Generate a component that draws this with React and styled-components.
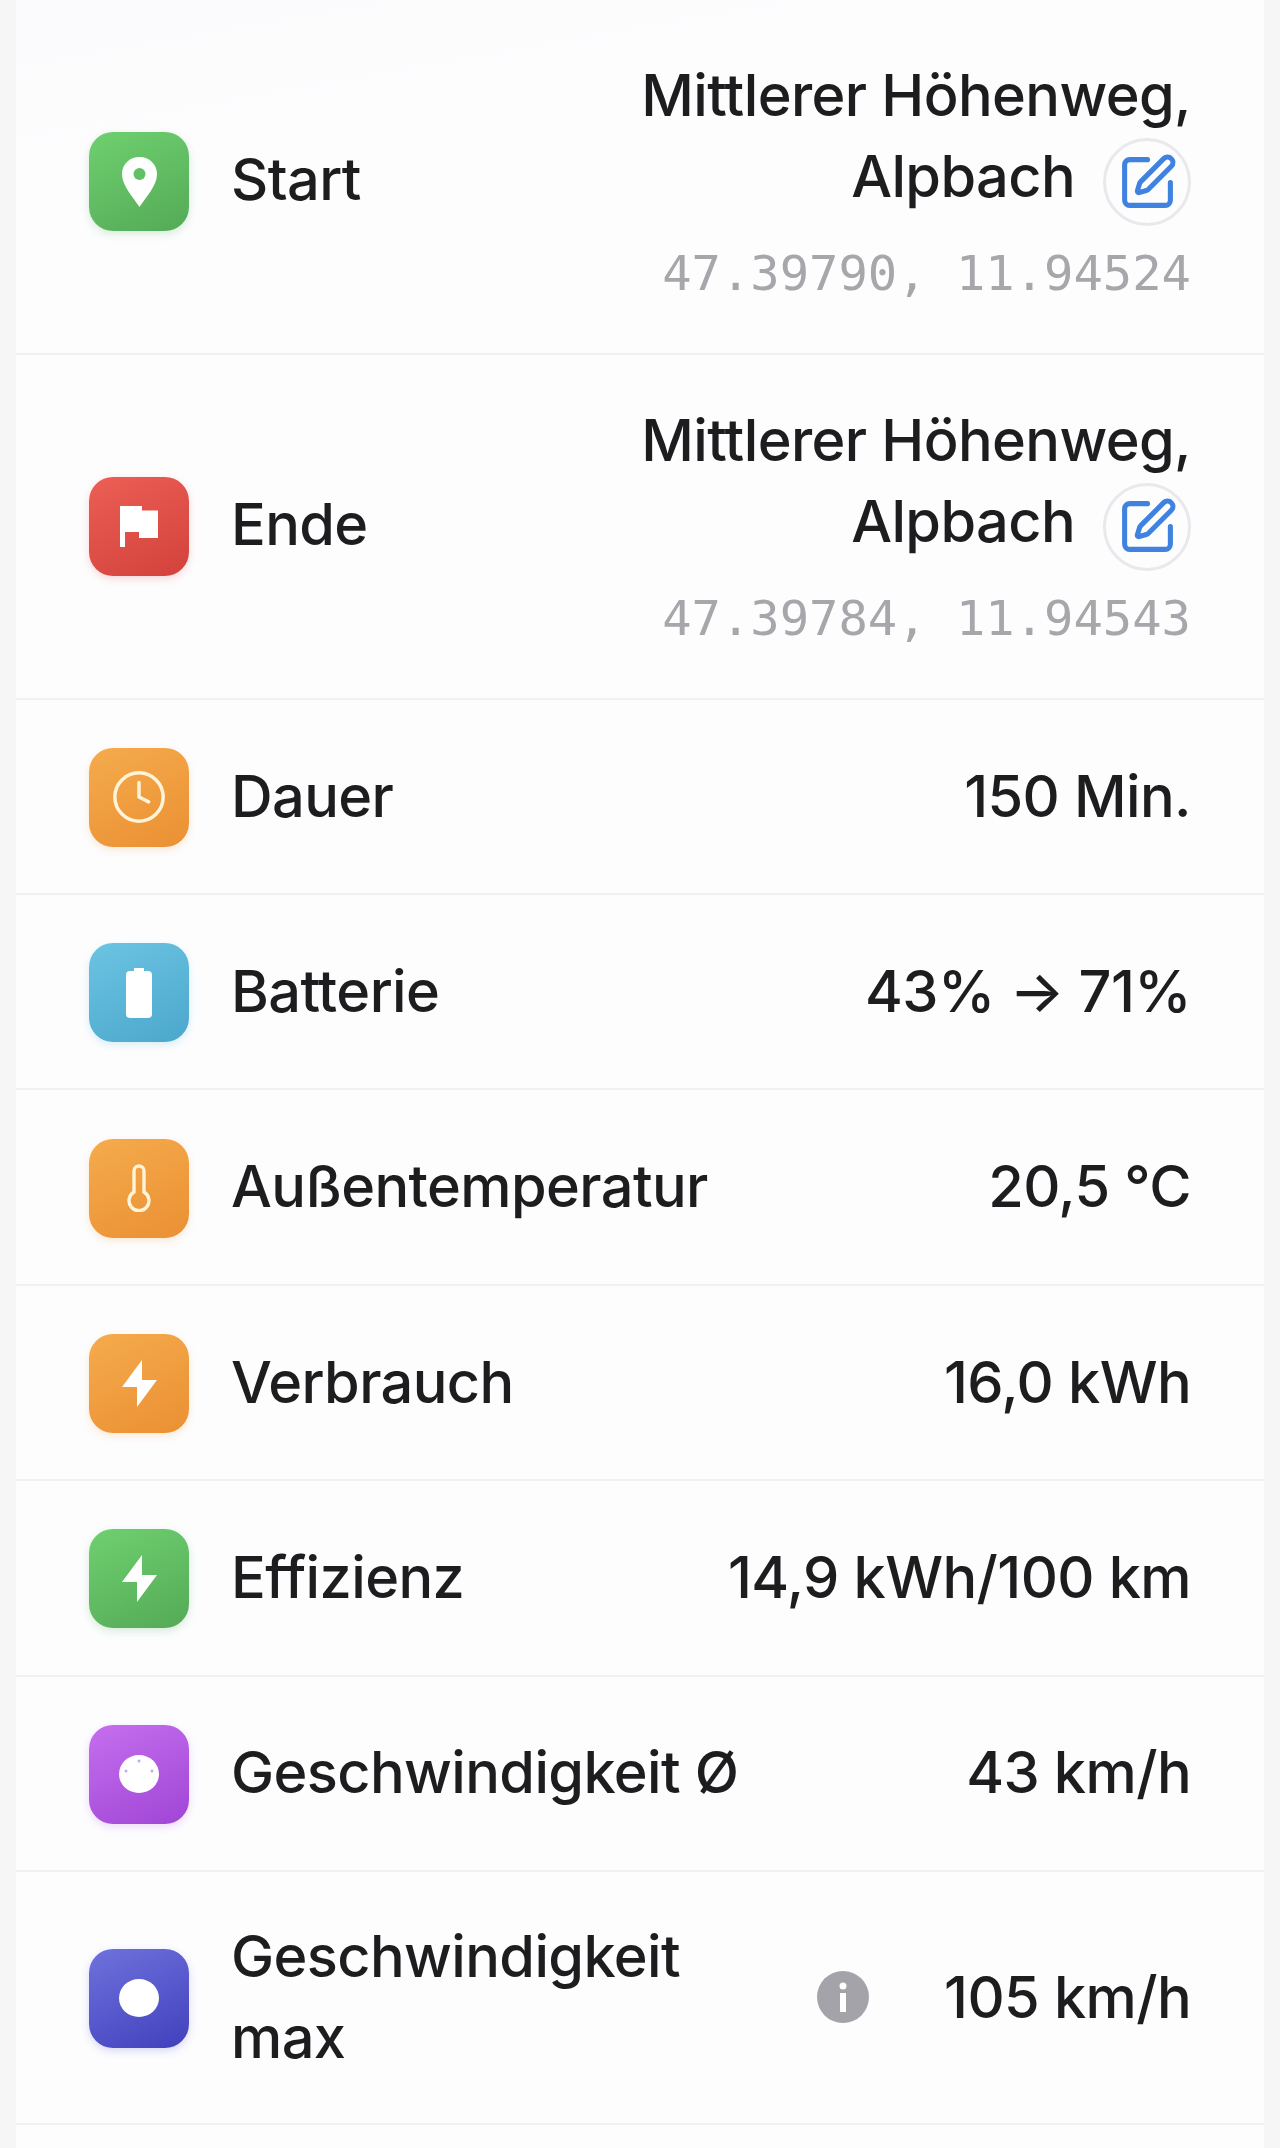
import React from 'react';
import styled, { createGlobalStyle } from 'styled-components';
import { SquarePen, Clock } from 'lucide-react';

const GlobalStyle = createGlobalStyle`
  html, body {
    margin: 0;
    padding: 0;
    background: #f6f6f7;
  }
  body {
    font-family: Inter, "Liberation Sans", sans-serif;
    color: #1d1d1f;
    height: 2148px;
    overflow: hidden;
  }
`;

const Card = styled.div`
  margin: 0 16px;
  padding-top: 10px;
  background: linear-gradient(170deg, #fbfbfd 0, #fdfdfe 160px);
  height: 2138px;
`;

const Row = styled.div`
  display: flex;
  align-items: center;
  justify-content: space-between;
  padding: ${(p) => p.$top}px 73px ${(p) => p.$bottom}px 73px;
  border-bottom: 2px solid #f1f1f3;
`;

const Left = styled.div`
  display: flex;
  align-items: center;
  gap: 42px;
  min-width: 0;
`;

const Right = styled.div`
  display: flex;
  align-items: center;
  gap: 75px;
`;

const IconTile = styled.div`
  width: 100px;
  height: 99px;
  margin-top: ${(p) => p.$drop}px;
  flex: none;
  display: flex;
  align-items: center;
  justify-content: center;
  border-radius: 24px;
  color: ${(p) => p.$ink || '#fff'};
  background: linear-gradient(155deg, ${(p) => p.$from}, ${(p) => p.$to});
  box-shadow: 0 3px 9px ${(p) => p.$glow};
`;

const Label = styled.div`
  font-size: 57.7px;
  line-height: 81.4px;
  font-weight: 450;
  letter-spacing: -0.6px;
  width: ${(p) => (p.$wrap ? '500px' : 'auto')};
`;

const Value = styled.div`
  font-size: 57.7px;
  line-height: 81.4px;
  font-weight: 450;
  letter-spacing: -0.6px;
  white-space: nowrap;
  text-align: right;
`;

const Place = styled.div`
  display: flex;
  flex-direction: column;
  align-items: flex-end;
`;

const PlaceLine = styled.div`
  display: flex;
  align-items: center;
  gap: 28px;
  font-size: 57.7px;
  line-height: 81.4px;
  font-weight: 450;
  letter-spacing: -0.6px;
  white-space: nowrap;
`;

const EditButton = styled.button`
  width: 88px;
  height: 88px;
  margin: 1px 0 -9px;
  padding: 0;
  flex: none;
  display: flex;
  align-items: center;
  justify-content: center;
  background: #fdfdfe;
  border: 3px solid #e9e9ed;
  border-radius: 50%;
  color: #3f82e0;
`;

const Coords = styled.div`
  margin-top: 26px;
  font-family: "DejaVu Sans Mono", "Liberation Mono", monospace;
  font-size: 48.8px;
  line-height: 60px;
  font-weight: 400;
  color: #a6a6ab;
`;

const InfoDot = styled.div`
  width: 52px;
  height: 52px;
  border-radius: 50%;
  background: #a3a3a9;
  color: #fff;
  display: flex;
  align-items: center;
  justify-content: center;
`;

const Pin = ({ hole }) => (
  <svg width="35" height="50" viewBox="0 0 35 50">
    <path d="M17.5 0C7.5 0 0 7.5 0 17c0 12 11 23 17.5 33C24 40 35 29 35 17 35 7.5 27.5 0 17.5 0z" fill="#fff" />
    <circle cx="17.5" cy="17" r="6" fill={hole} />
  </svg>
);

const Flag = () => (
  <svg width="38" height="41" viewBox="0 0 38 41">
    <path d="M0 0H22V4.5H38V32H19V26H5V41H0z" fill="#fff" />
  </svg>
);

const Battery = () => (
  <svg width="26" height="50" viewBox="0 0 26 50">
    <path d="M8 0h10v3h4a4 4 0 0 1 4 4v39a4 4 0 0 1-4 4H4a4 4 0 0 1-4-4V7a4 4 0 0 1 4-4h4z" fill="#fff" />
  </svg>
);

const Bolt = () => (
  <svg width="35" height="47" viewBox="0 0 35 47">
    <path d="M20 0 0 27h15v20L35 20H20z" fill="#fff" />
  </svg>
);

const Thermo = () => (
  <svg width="24" height="48" viewBox="0 0 24 48" fill="none" stroke="currentColor" strokeWidth="3.4">
    <path d="M17 28V7a5 5 0 0 0-10 0V28a10 10 0 1 0 10 0z" />
  </svg>
);

const Gauge = ({ ticks }) => (
  <svg width="40" height="38" viewBox="0 0 40 38">
    <ellipse cx="20" cy="19" rx="20" ry="19" fill="#fff" />
    {ticks && (
      <g fill="#c9a6ee">
        <circle cx="20" cy="6" r="1.5" />
        <circle cx="7" cy="16" r="1.5" />
        <circle cx="33" cy="16" r="1.5" />
      </g>
    )}
  </svg>
);

const green = { $from: '#6fd070', $to: '#54aa56', $glow: 'rgba(80,170,85,.22)' };
const orange = { $from: '#f5ab4c', $to: '#ea9033', $glow: 'rgba(240,150,50,.2)', $ink: '#fff3d8' };

const simpleRows = [
  { label: 'Dauer', value: '150 Min.', tile: orange, icon: <Clock size={58} strokeWidth={1.45} /> },
  { label: 'Batterie', value: '43% → 71%', tile: { $from: '#6cc4e2', $to: '#4ba7cc', $glow: 'rgba(80,170,210,.2)' }, icon: <Battery /> },
  { label: 'Außentemperatur', value: '20,5 °C', tile: orange, icon: <Thermo /> },
  { label: 'Verbrauch', value: '16,0 kWh', tile: orange, icon: <Bolt /> },
  { label: 'Effizienz', value: '14,9 kWh/100 km', tile: green, icon: <Bolt /> },
  { label: 'Geschwindigkeit Ø', value: '43 km/h', tile: { $from: '#c56fee', $to: '#a045d6', $glow: 'rgba(180,90,230,.22)' }, icon: <Gauge ticks /> },
];

const LocationRow = ({ label, tile, icon, coords }) => (
  <Row $top={45} $bottom={49}>
    <Left>
      <IconTile $drop={5} {...tile}>{icon}</IconTile>
      <Label>{label}</Label>
    </Left>
    <Place>
      <PlaceLine>Mittlerer Höhenweg,</PlaceLine>
      <PlaceLine>
        Alpbach
        <EditButton>
          <SquarePen size={61} strokeWidth={2} />
        </EditButton>
      </PlaceLine>
      <Coords>{coords}</Coords>
    </Place>
  </Row>
);

export default function App() {
  return (
    <>
      <GlobalStyle />
      <Card>
        <LocationRow label="Start" tile={green} icon={<Pin hole="#62c065" />} coords="47.39790, 11.94524" />
        <LocationRow
          label="Ende"
          tile={{ $from: '#ec5f55', $to: '#d2423b', $glow: 'rgba(220,70,60,.2)' }}
          icon={<Flag />}
          coords="47.39784, 11.94543"
        />
        {simpleRows.map((r) => (
          <Row $top={46.2} $bottom={46.2} key={r.label}>
            <Left>
              <IconTile $drop={2} {...r.tile}>{r.icon}</IconTile>
              <Label>{r.label}</Label>
            </Left>
            <Value>{r.value}</Value>
          </Row>
        ))}
        <Row $top={44} $bottom={44}>
          <Left>
            <IconTile $drop={2} $from="#6f72dc" $to="#4140bd" $glow="rgba(80,80,210,.22)">
              <Gauge />
            </IconTile>
            <Label $wrap>Geschwindigkeit max</Label>
          </Left>
          <Right>
            <InfoDot>
              <svg width="10" height="30" viewBox="0 0 10 30">
                <circle cx="5" cy="4" r="3.5" fill="#fff" />
                <rect x="2" y="11" width="6" height="19" fill="#fff" />
              </svg>
            </InfoDot>
            <Value>105 km/h</Value>
          </Right>
        </Row>
      </Card>
    </>
  );
}
